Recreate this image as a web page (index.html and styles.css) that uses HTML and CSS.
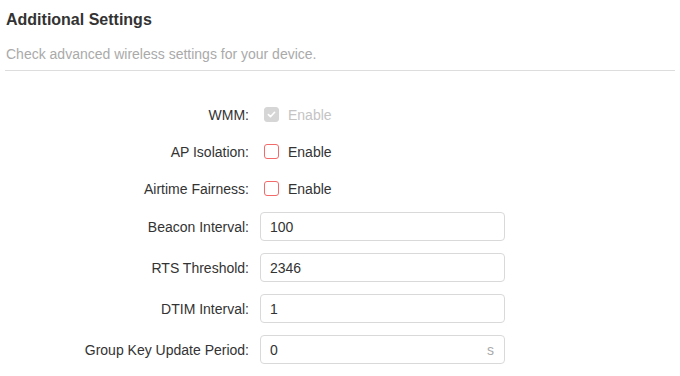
FILE: index.html
```html
<!DOCTYPE html>
<html lang="en">

<head>
    <meta charset="UTF-8">
    <meta name="viewport" content="width=device-width, initial-scale=1.0">
    <title>Additional Settings</title>
    <link rel="stylesheet" href="styles.css">
</head>

<body>
    <div class="panel">
        <h3 class="title">Additional Settings</h3>
        <p class="desc">Check advanced wireless settings for your device.</p>

        <div class="form">
            <div class="row check-row">
                <label class="label">WMM:</label>
                <div class="control">
                    <span class="box checked disabled">
                        <svg viewBox="0 0 16 16" width="11" height="11"><path d="M3.5 8.2l3 3 6-6.4" fill="none" stroke="#fff" stroke-width="2.4" stroke-linecap="round" stroke-linejoin="round"/></svg>
                    </span>
                    <span class="text muted">Enable</span>
                </div>
            </div>
            <div class="row check-row">
                <label class="label">AP Isolation:</label>
                <div class="control">
                    <span class="box"></span>
                    <span class="text">Enable</span>
                </div>
            </div>
            <div class="row check-row">
                <label class="label">Airtime Fairness:</label>
                <div class="control">
                    <span class="box"></span>
                    <span class="text">Enable</span>
                </div>
            </div>
            <div class="row input-row first">
                <label class="label">Beacon Interval:</label>
                <div class="field"><input type="text" value="100"></div>
            </div>
            <div class="row input-row">
                <label class="label">RTS Threshold:</label>
                <div class="field"><input type="text" value="2346"></div>
            </div>
            <div class="row input-row">
                <label class="label">DTIM Interval:</label>
                <div class="field"><input type="text" value="1"></div>
            </div>
            <div class="row input-row">
                <label class="label">Group Key Update Period:</label>
                <div class="field"><input type="text" value="0"><span class="unit">s</span></div>
            </div>
        </div>
    </div>
</body>

</html>
```

FILE: styles.css
```css
body {
    margin: 0;
    background: #fff;
    font-family: "Liberation Sans", Arial, sans-serif;
    color: #333;
}

.panel {
    padding: 0 5px;
}

.title {
    margin: 0;
    padding: 11px 0 0 1px;
    font-size: 16px;
    font-weight: bold;
    line-height: 18px;
    color: #333;
}

.desc {
    margin: 0;
    padding: 16px 0 7px 1px;
    font-size: 14px;
    line-height: 18px;
    color: #aaa;
    border-bottom: 1px solid #ddd;
}

.form {
    padding-top: 25px;
}

.row {
    display: flex;
    align-items: center;
}

.label {
    width: 244px;
    text-align: right;
    font-size: 14px;
    color: #333;
    flex-shrink: 0;
}

.check-row {
    height: 37px;
}

.control {
    display: flex;
    align-items: center;
    margin-left: 15px;
    gap: 9px;
}

.box {
    width: 13px;
    height: 13px;
    border: 1px solid #f26a6a;
    border-radius: 3px;
    display: flex;
    align-items: center;
    justify-content: center;
}

.box.checked {
    background: #d6d6d6;
    border-color: #d6d6d6;
}

.text {
    font-size: 14px;
    color: #333;
}

.text.muted {
    color: #c4c4c4;
}

.input-row {
    height: 29px;
    margin-top: 12px;
}

.input-row.first {
    margin-top: 5px;
}

.field {
    margin-left: 11px;
    width: 245px;
    height: 29px;
    box-sizing: border-box;
    border: 1px solid #d9d9d9;
    border-radius: 4px;
    display: flex;
    align-items: center;
    padding: 0 10px 0 9px;
}

.field input {
    flex: 1;
    min-width: 0;
    border: none;
    outline: none;
    padding: 0;
    font-family: inherit;
    font-size: 14px;
    color: #333;
    background: transparent;
}

.unit {
    font-size: 14px;
    color: #aaa;
}
```
